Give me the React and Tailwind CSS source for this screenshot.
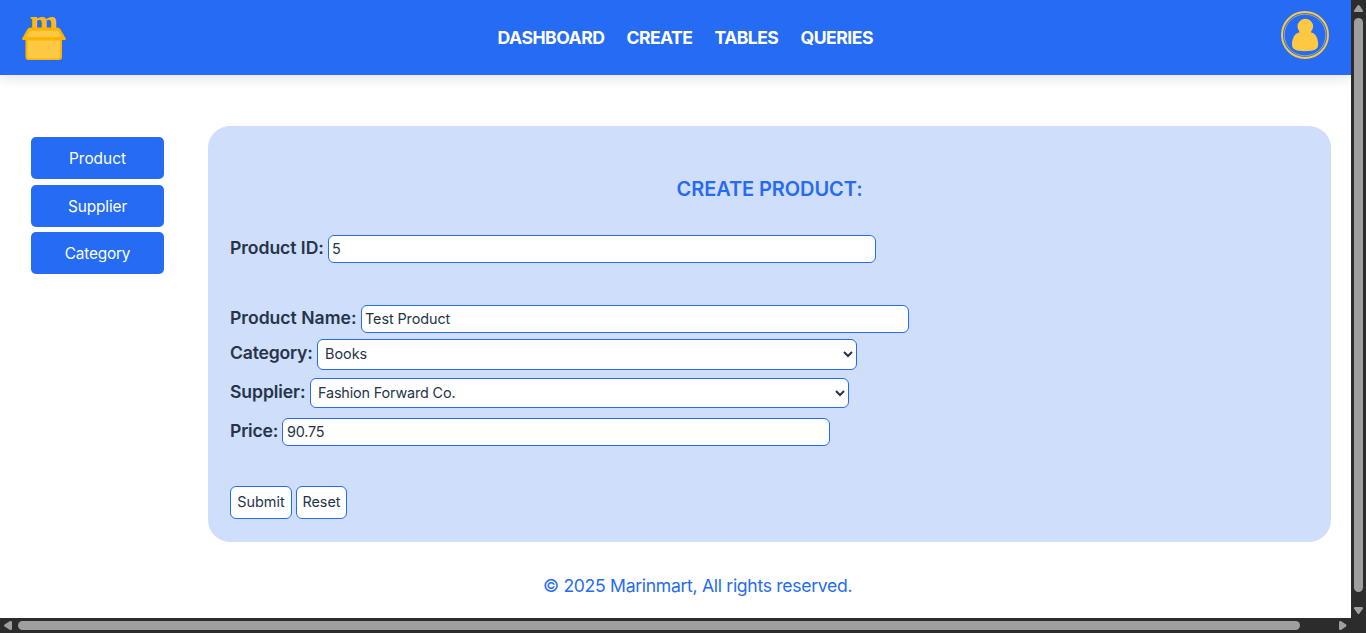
import React from "react";

function Logo() {
  return (
    <svg width="46" height="46" viewBox="0 0 46 46" className="mt-[15px] ml-[21px] shrink-0 overflow-visible">
      <text x="0" y="0" transform="translate(8.500 20.800) scale(1 1.200)" fontFamily="'Liberation Serif', serif" fontWeight="700" fontSize="34" textLength="28.500" lengthAdjust="spacingAndGlyphs" fill="#fdb913">m</text>
      <path d="M7 22H38.500Q41 22 41 24.500V42Q41 45 38 45H7.500Q4.500 45 4.500 42V22Z" fill="#ffb300" />
      <path d="M10 12.500H36Q38.500 12.500 39.500 14.500L44.800 23.500Q45.300 25 43.500 25H2.500Q.700 25 1.200 23.500L6.200 14.500Q7.500 12.500 10 12.500Z" fill="#ffb300" />
      <path d="M10 15.800H36.200Q37 15.800 37.500 16.500L40.700 22H5L8.200 16.700Q8.700 15.800 10 15.800Z" fill="#ffc843" />
      <path d="M6.500 25.500H39V41.500Q39 43.500 37 43.500H8.500Q6.500 43.500 6.500 41.500Z" fill="#ffc843" />
    </svg>
  );
}

function Avatar() {
  return (
    <svg width="48" height="48" viewBox="0 0 48 48" className="mt-[11px] mr-[22px] shrink-0">
      <circle cx="24" cy="24" r="23" fill="none" stroke="#ffc843" strokeWidth="1.900" />
      <circle cx="24" cy="24" r="20.800" fill="none" stroke="#ffc843" strokeOpacity=".75" strokeWidth=".8" />
      <circle cx="24.300" cy="15.500" r="7.800" fill="#ffc843" />
      <path d="M18.500 19H30V21.500C34 21.500 37.200 27 37.200 33.500C37.200 38 34 40.200 24 40.200C14 40.200 11 38 11 33.500C11 27 14.500 21.500 18.500 21.500Z" fill="#ffc843" />
    </svg>
  );
}

const links = [
  ["DASHBOARD", "w-[107px] tracking-[-0.480px]"],
  ["CREATE", "w-[66px] tracking-[-0.560px]"],
  ["TABLES", "w-[64px] tracking-[-0.550px]"],
  ["QUERIES", "w-[73px] tracking-[-0.500px]"],
];

const label = "mr-1 h-[28px] shrink-0 whitespace-nowrap text-[17.600px] font-semibold text-[#263449]";
const field = "rounded-[6px] border border-[#256bf4] bg-white text-[14.400px] text-[#263449] outline-none";
const side = "h-[42px] rounded-[5px] bg-[#256bf4] pt-[1px]";

export default function App() {
  return (
    <div className="grid h-[633px] w-[1366px] grid-cols-[1351px_15px] grid-rows-[618px_15px] overflow-hidden bg-white font-['Inter',sans-serif]">
      <div className="flex flex-col overflow-hidden">
        <header className="flex h-[75px] shrink-0 items-start justify-between bg-[#256bf4] shadow-[0_4px_12px_rgba(0,0,0,0.1)]">
          <Logo />
          <nav className="mt-[24px] flex gap-[22px] pl-[23px] text-[17.600px] leading-[28px] font-bold text-white">
            {links.map(([name, cls]) => (
              <a key={name} className={`block whitespace-nowrap ${cls}`}>{name}</a>
            ))}
          </nav>
          <Avatar />
        </header>
        <main className="flex">
          <aside className="mt-[62px] ml-[31px] flex w-[133px] flex-col text-[15.400px] text-white">
            <button className={`${side} mb-[6px]`}>Product</button>
            <button className={`${side} mb-[5px] tracking-[-0.100px]`}>Supplier</button>
            <button className={`${side} tracking-[-0.200px]`}>Category</button>
          </aside>
          <form className="mt-[51px] ml-[44px] h-[416px] w-[1123px] rounded-[22px] bg-[#cfdefb] px-[22px]" onSubmit={(e) => e.preventDefault()}>
            <h1 className="mt-[48px] h-[61px] text-center text-[20px] leading-[30px] font-semibold tracking-[-0.080px] text-[#256bf4]">CREATE PRODUCT:</h1>
            <div className="flex h-[70px]">
              <label className={`${label} w-[94px] leading-[26px] tracking-[-0.060px]`}>Product ID:</label>
              <input className={`${field} h-[28px] w-[548px] px-[3px] pb-[2px]`} defaultValue="5" />
            </div>
            <div className="flex h-[34px]">
              <label className={`${label} w-[127px] leading-[26px] tracking-[-0.010px]`}>Product Name:</label>
              <input className={`${field} h-[28px] w-[548px] px-[3px] pb-[2px] tracking-[-0.080px]`} defaultValue="Test Product" />
            </div>
            <div className="flex h-[39px]">
              <label className={`${label} w-[83px] leading-[28px] tracking-[-0.200px]`}>Category:</label>
              <select className={`${field} h-[31px] w-[540px] pr-[3px] pb-[2px] pl-[3px]`}><option>Books</option></select>
            </div>
            <div className="flex h-[40px]">
              <label className={`${label} w-[76px] leading-[28px] tracking-[-0.100px]`}>Supplier:</label>
              <select className={`${field} h-[30px] w-[539px] pr-[3px] pb-[2px] pl-[3px] tracking-[-0.150px]`}><option>Fashion Forward Co.</option></select>
            </div>
            <div className="flex h-[68px]">
              <label className={`${label} w-[48px] leading-[26px] tracking-[-0.200px]`}>Price:</label>
              <input className={`${field} h-[28px] w-[548px] px-[4px] pb-[2px] tracking-[-0.200px]`} defaultValue="90.75" />
            </div>
            <div className="flex gap-[4px]">
              <button className={`${field} h-[33px] w-[62px] pb-[2px]`}>Submit</button>
              <button className={`${field} h-[33px] w-[51px] pb-[2px]`}>Reset</button>
            </div>
          </form>
        </main>
        <footer className="mt-[30px] ml-[543px] text-[17.600px] leading-[28px] whitespace-nowrap text-[#256bf4]">
          <span className="tracking-[-0.310px]">© 2025 Marinmart, All rights reserved.</span>
        </footer>
      </div>
      <div className="flex flex-col items-center bg-[#2c2c2c]">
        <svg width="15" height="18" viewBox="0 0 15 18"><path d="M6.500 5.500Q7.500 4.500 8.500 5.500L12 10.500Q12.200 12 11 12H4Q2.800 12 3 10.500Z" fill="#9f9f9f" /></svg>
        <div className="h-[574px] w-[9px] rounded-full bg-[#9f9f9f]" />
        <svg width="15" height="26" viewBox="0 0 15 26"><path d="M6.500 21.500Q7.500 22.500 8.500 21.500L12 16.500Q12.200 15 11 15H4Q2.800 15 3 16.500Z" fill="#9f9f9f" /></svg>
      </div>
      <div className="flex items-center bg-[#2c2c2c]">
        <svg width="18" height="15" viewBox="0 0 18 15"><path d="M4.500 6.500Q3.500 7.500 4.500 8.500L10 12Q12 12.200 12 11V4Q12 2.800 10 3Z" fill="#9f9f9f" /></svg>
        <div className="h-[9px] w-[1282px] rounded-full bg-[#9f9f9f]" />
        <svg width="51" height="15" viewBox="0 0 51 15"><path d="M46 6.500Q47 7.500 46 8.500L41 12Q39 12.200 39 11V4Q39 2.800 41 3Z" fill="#9f9f9f" /></svg>
      </div>
      <div className="bg-[#2c2c2c]" />
    </div>
  );
}
